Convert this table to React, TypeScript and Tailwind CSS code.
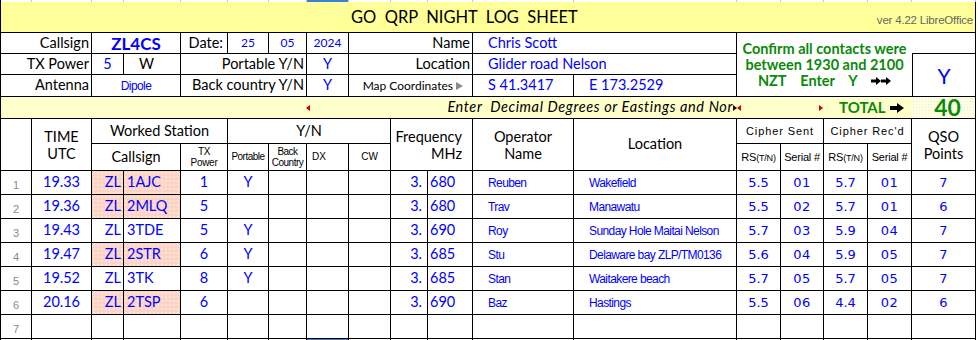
import React from "react";

type Qso = {
  time: string;
  call: string;
  pwr: string;
  port: string;
  khz: string;
  op: string;
  loc: string;
  rsS: string;
  serS: string;
  rsR: string;
  serR: string;
  pts: string;
  pink: boolean;
};

const qsos: Qso[] = [
  { time: "19.33", call: "1AJC", pwr: "1", port: "Y", khz: "680", op: "Reuben", loc: "Wakefield", rsS: "5.5", serS: "01", rsR: "5.7", serR: "01", pts: "7", pink: true },
  { time: "19.36", call: "2MLQ", pwr: "5", port: "", khz: "680", op: "Trav", loc: "Manawatu", rsS: "5.5", serS: "02", rsR: "5.7", serR: "01", pts: "6", pink: true },
  { time: "19.43", call: "3TDE", pwr: "5", port: "Y", khz: "690", op: "Roy", loc: "Sunday Hole Maitai Nelson", rsS: "5.7", serS: "03", rsR: "5.9", serR: "04", pts: "7", pink: false },
  { time: "19.47", call: "2STR", pwr: "6", port: "Y", khz: "685", op: "Stu", loc: "Delaware bay ZLP/TM0136", rsS: "5.6", serS: "04", rsR: "5.9", serR: "05", pts: "7", pink: true },
  { time: "19.52", call: "3TK", pwr: "8", port: "Y", khz: "685", op: "Stan", loc: "Waitakere beach", rsS: "5.7", serS: "05", rsR: "5.7", serR: "05", pts: "7", pink: false },
  { time: "20.16", call: "2TSP", pwr: "6", port: "", khz: "690", op: "Baz", loc: "Hastings", rsS: "5.5", serS: "06", rsR: "4.4", serR: "02", pts: "6", pink: true },
];

const cell = "border-r border-b border-black flex items-center min-w-0";
const blue = "text-[#0000ff]";
const green = "text-[#0a8a0a]";
const arial = "font-['Liberation_Sans',Arial,sans-serif]";
const deja = "font-['DejaVu_Sans',Verdana,sans-serif]";
const pink =
  "bg-[#fcd4c6] [background-image:radial-gradient(circle,#fff1ec_0.5px,transparent_0.9px)] [background-size:4px_4px]";

function BlockArrow({ w = 14, h = 10 }: { w?: number; h?: number }) {
  return (
    <svg width={w} height={h} viewBox="0 0 14 10" preserveAspectRatio="none" className="inline-block">
      <path d="M0 3h7V0l7 5-7 5V7H0z" fill="#000" />
    </svg>
  );
}

function TriL({ color = "#d40000" }: { color?: string }) {
  return (
    <svg width="4" height="6" viewBox="0 0 4 6">
      <path d="M4 0v6L0 3z" fill={color} />
    </svg>
  );
}

function TriR({ color = "#d40000" }: { color?: string }) {
  return (
    <svg width="4" height="6" viewBox="0 0 4 6">
      <path d="M0 0v6l4-3z" fill={color} />
    </svg>
  );
}

export default function App() {
  return (
    <div className="w-[978px] h-[340px] overflow-hidden bg-white font-['Lato',sans-serif] text-[14.5px] text-black leading-none">
      <div className="grid w-[976px] border-l border-black grid-cols-[31px_60px_32px_57px_47px_41px_38px_42px_42px_37px_45px_101px_163px_44px_43px_44px_44px_64px] grid-rows-[2px_31px_21px_21px_22px_22px_25px_27px_repeat(8,24px)]">
        {/* sheet grid strip */}
        {Array.from({ length: 18 }).map((_, i) => (
          <div key={"t" + i} className={i === 7 ? "bg-[#3c7fd9] border-r border-[#c8c8c8]" : "border-r border-[#c8c8c8]"} />
        ))}

        {/* title */}
        <div className="col-span-18 bg-[#ffff99] border-r border-b border-black flex items-center">
          <span className="ml-[350px] text-[16.5px] whitespace-pre">GO  QRP  NIGHT  LOG  SHEET</span>
          <span className={`ml-auto self-end mb-[6px] mr-[2px] text-[11.5px] text-[#666] tracking-[-0.2px] ${arial}`}>
            ver 4.22 LibreOffice
          </span>
        </div>

        {/* row A */}
        <div className={`${cell} col-span-2 justify-end pr-[2px]`}>Callsign</div>
        <div className={`${cell} col-span-2 justify-center font-bold text-[17px] ${blue}`}>ZL4CS</div>
        <div className={`${cell} justify-end pr-[4px]`}>Date:</div>
        <div className={`${cell} justify-center text-[12px] ${blue}`}>25</div>
        <div className={`${cell} justify-center text-[12px] ${blue}`}>05</div>
        <div className={`${cell} justify-center text-[12px] ${blue}`}>2024</div>
        <div className={`${cell} col-span-3 justify-end pr-[2px]`}>Name</div>
        <div className={`${cell} col-span-2 pl-[15px] ${blue}`}>Chris Scott</div>
        <div className={`col-span-4 row-span-3 border-b border-black flex flex-col items-center justify-center font-bold text-[14.5px] leading-[16px] ${green}`}>
          <span>Confirm all contacts were</span>
          <span>between 1930 and 2100</span>
          <span className="flex items-center whitespace-pre">
            NZT    Enter    Y    <BlockArrow w={10} h={8} />
            <BlockArrow w={10} h={8} />
          </span>
        </div>
        <div className="border-r border-b border-black" />

        {/* row B */}
        <div className={`${cell} col-span-2 justify-end pr-[2px]`}>TX Power</div>
        <div className={`${cell} justify-center ${blue}`}>5</div>
        <div className={`${cell} pl-[15px]`}>W</div>
        <div className={`${cell} col-span-3 justify-end pr-[2px]`}>Portable Y/N</div>
        <div className={`${cell} justify-center ${blue}`}>Y</div>
        <div className={`${cell} col-span-3 justify-end pr-[2px]`}>Location</div>
        <div className={`${cell} col-span-2 pl-[15px] ${blue}`}>Glider road Nelson</div>
        <div className={`row-span-2 border-l border-r border-b border-black flex items-center justify-center text-[21px] ${blue}`}>
          Y
        </div>

        {/* row C */}
        <div className={`${cell} col-span-2 justify-end pr-[2px]`}>Antenna</div>
        <div className={`${cell} col-span-2 justify-center text-[12px] tracking-[-0.6px] ${arial} ${blue}`}>Dipole</div>
        <div className={`${cell} col-span-3 justify-end pr-[2px]`}>Back country Y/N</div>
        <div className={`${cell} justify-center ${blue}`}>Y</div>
        <div className={`${cell} col-span-3 justify-end pr-[9px] text-[12px] gap-[3px]`}>
          <span>Map Coordinates</span>
          <svg width="7" height="8" viewBox="0 0 7 8">
            <path d="M0 0v8l7-4z" fill="#8c8c8c" />
          </svg>
        </div>
        <div className={`${cell} pl-[15px] ${blue}`}>S 41.3417</div>
        <div className={`${cell} pl-[15px] ${blue}`}>E 173.2529</div>

        {/* row D */}
        <div className="col-span-17 border-b border-black bg-[#ffffcc] flex items-center">
          <div className="w-[309px] flex justify-end">
            <TriL />
          </div>
          <div className="w-[423px] whitespace-pre text-right italic tracking-[0.6px]">
            Enter  Decimal Degrees or Eastings and Nor
          </div>
          <div className="flex items-center">
            <TriR color="#300" />
            <TriL />
          </div>
          <div className="ml-[78px]">
            <TriR />
          </div>
          <span className={`ml-[16px] font-bold text-[15px] ${green}`}>TOTAL</span>
          <span className="ml-[4px] flex items-center">
            <BlockArrow w={14} h={10} />
          </span>
        </div>
        <div
          className={`border-r border-b border-black flex items-center justify-center pl-[8px] font-bold text-[23px] ${green} bg-[#fffee6] [background-image:radial-gradient(circle,#f1eeb8_0.6px,transparent_1px)] [background-size:3px_3px]`}
        >
          40
        </div>

        {/* header row 1 */}
        <div className={`${cell} row-span-2`} />
        <div className={`${cell} row-span-2 flex-col justify-center leading-[17px]`}>
          <span>TIME</span>
          <span>UTC</span>
        </div>
        <div className={`${cell} col-span-3 justify-center`}>Worked Station</div>
        <div className={`${cell} col-span-4 justify-center`}>Y/N</div>
        <div className={`${cell} col-span-2 row-span-2 flex-col items-end justify-center pr-[10px] leading-[17px]`}>
          <span>Frequency</span>
          <span>MHz</span>
        </div>
        <div className={`${cell} row-span-2 flex-col justify-center leading-[17px]`}>
          <span>Operator</span>
          <span>Name</span>
        </div>
        <div className={`${cell} row-span-2 justify-center`}>Location</div>
        <div className={`${cell} col-span-2 justify-center text-[11px] tracking-[0.9px] ${arial}`}>Cipher Sent</div>
        <div className={`${cell} col-span-2 justify-center text-[11px] tracking-[0.9px] ${arial}`}>Cipher Rec'd</div>
        <div className={`${cell} row-span-2 flex-col justify-center leading-[17px]`}>
          <span>QSO</span>
          <span>Points</span>
        </div>

        {/* header row 2 */}
        <div className={`${cell} col-span-2 justify-center`}>Callsign</div>
        <div className={`${cell} flex-col justify-center text-[10px] leading-[11px] tracking-[-0.3px] ${arial}`}>
          <span>TX</span>
          <span>Power</span>
        </div>
        <div className={`${cell} justify-center text-[10px] tracking-[-0.5px] ${arial}`}>Portable</div>
        <div className={`${cell} flex-col justify-center text-[10px] leading-[11px] tracking-[-0.5px] ${arial}`}>
          <span>Back</span>
          <span>Country</span>
        </div>
        <div className={`${cell} justify-start pl-[5px] text-[10px] ${arial}`}>DX</div>
        <div className={`${cell} justify-center text-[10px] ${arial}`}>CW</div>
        {["RS", "Serial #", "RS", "Serial #"].map((t, i) => (
          <div key={"h" + i} className={`${cell} justify-center text-[11px] tracking-[-0.2px] ${arial}`}>
            {t === "RS" ? (
              <span>
                RS<span className="text-[9px]">(T/N)</span>
              </span>
            ) : (
              t
            )}
          </div>
        ))}

        {/* data rows */}
        {qsos.map((q, i) => (
          <React.Fragment key={q.time}>
            <div className={`${cell} items-end justify-center pb-[3px] text-[11px] text-[#8a8a8a] ${arial}`}>{i + 1}</div>
            <div className={`${cell} justify-center ${blue}`}>{q.time}</div>
            <div className={`${cell} justify-end pr-[2px] ${blue} ${q.pink ? pink : ""}`}>ZL</div>
            <div className={`${cell} pl-[3px] ${blue} ${q.pink ? pink : ""}`}>{q.call}</div>
            <div className={`${cell} justify-center ${blue}`}>{q.pwr}</div>
            <div className={`${cell} justify-center ${blue}`}>{q.port}</div>
            <div className={cell} />
            <div className={cell} />
            <div className={cell} />
            <div className={`${cell} justify-end pr-[5px] ${blue}`}>3.</div>
            <div className={`${cell} pl-[2px] ${blue}`}>{q.khz}</div>
            <div className={`${cell} pl-[15px] text-[12px] tracking-[-0.6px] ${arial} ${blue}`}>{q.op}</div>
            <div className={`${cell} pl-[15px] text-[12px] tracking-[-0.6px] whitespace-nowrap ${arial} ${blue}`}>{q.loc}</div>
            <div className={`${cell} justify-center text-[13px] ${deja} ${blue}`}>{q.rsS}</div>
            <div className={`${cell} justify-center text-[13px] tracking-[0.6px] ${deja} ${blue}`}>{q.serS}</div>
            <div className={`${cell} justify-center text-[13px] ${deja} ${blue}`}>{q.rsR}</div>
            <div className={`${cell} justify-center text-[13px] tracking-[0.6px] ${deja} ${blue}`}>{q.serR}</div>
            <div className={`${cell} justify-center text-[13px] ${deja} ${blue}`}>{q.pts}</div>
          </React.Fragment>
        ))}

        {/* empty row 7 */}
        <div className={`${cell} items-end justify-center pb-[3px] text-[11px] text-[#8a8a8a] ${arial}`}>7</div>
        {Array.from({ length: 17 }).map((_, i) => (
          <div key={"e" + i} className={cell} />
        ))}

        {/* partial row 8 */}
        {Array.from({ length: 18 }).map((_, i) => (
          <div key={"p" + i} className={i === 7 ? "border-r border-black bg-[#3c7fd9]" : "border-r border-black"} />
        ))}
      </div>
    </div>
  );
}
